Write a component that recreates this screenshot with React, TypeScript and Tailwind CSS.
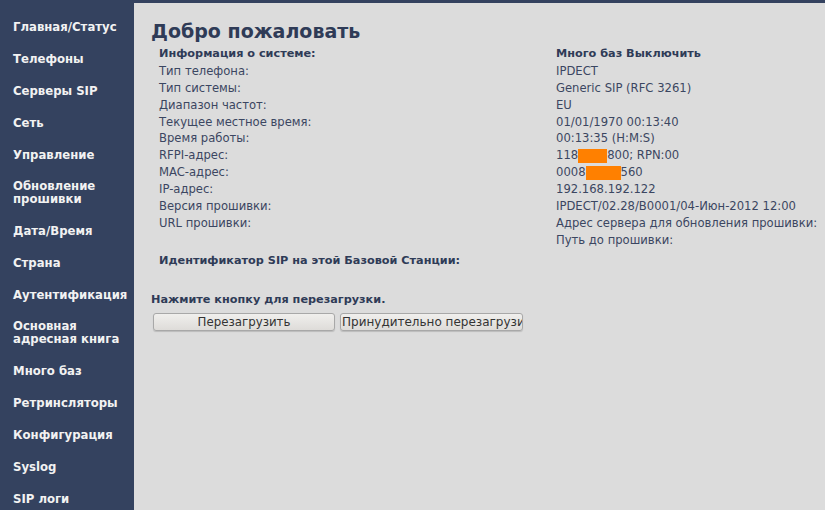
import React from 'react';

const MENU: string[][] = [
  ['Главная/Статус'],
  ['Телефоны'],
  ['Серверы SIP'],
  ['Сеть'],
  ['Управление'],
  ['Обновление', 'прошивки'],
  ['Дата/Время'],
  ['Страна'],
  ['Аутентификация'],
  ['Основная', 'адресная книга'],
  ['Много баз'],
  ['Ретринсляторы'],
  ['Конфигурация'],
  ['Syslog'],
  ['SIP логи'],
];

const ROWS: [string, React.ReactNode][] = [
  ['Тип телефона:', 'IPDECT'],
  ['Тип системы:', 'Generic SIP (RFC 3261)'],
  ['Диапазон частот:', 'EU'],
  ['Текущее местное время:', '01/01/1970 00:13:40'],
  ['Время работы:', '00:13:35 (H:M:S)'],
  [
    'RFPI-адрес:',
    <span className="flex items-center">
      118<span className="inline-block w-[29px] h-[14px] bg-[#ff8000]" />800; RPN:00
    </span>,
  ],
  [
    'MAC-адрес:',
    <span className="flex items-center">
      0008<span className="inline-block w-[35px] h-[14px] bg-[#ff8000]" />560
    </span>,
  ],
  ['IP-адрес:', '192.168.192.122'],
  ['Версия прошивки:', 'IPDECT/02.28/B0001/04-Июн-2012 12:00'],
  ['URL прошивки:', 'Адрес сервера для обновления прошивки:'],
  ['', 'Путь до прошивки:'],
];

export default function App() {
  return (
    <div className="flex h-[510px] w-[825px] overflow-hidden bg-[#34425f] font-['DejaVu_Sans',sans-serif]">
      <nav className="w-[134px] shrink-0 pt-[11px]">
        {MENU.map((lines) => (
          <div
            key={lines.join(' ')}
            className={`pl-[13px] py-[9px] text-[11.7px] font-bold text-[#f2f2f2] ${lines.length > 1 ? 'leading-[13px]' : 'leading-[14px]'}`}
          >
            {lines.map((l) => (
              <div key={l} className="whitespace-nowrap">{l}</div>
            ))}
          </div>
        ))}
      </nav>

      <main className="mt-[3px] flex-1 bg-[#dcdcdc] pl-[17px] text-[#3b4661]">
        <h1 className="mt-[16px] text-[19px] font-bold leading-[24px] text-[#2f3b57]">Добро пожаловать</h1>

        <div className="mt-[3px] pl-[8px] text-[11.6px] leading-[16.9px]">
          <div className="flex text-[11.25px] font-bold text-[#2f3b57]">
            <div className="w-[397px]">Информация о системе:</div>
            <div>Много баз Выключить</div>
          </div>
          {ROWS.map(([label, value], i) => (
            <div key={i} className="flex h-[16.9px]">
              <div className="w-[397px] shrink-0">{label}</div>
              <div className="whitespace-nowrap">{value}</div>
            </div>
          ))}
          <div className="mt-[4px] text-[11.25px] font-bold text-[#2f3b57]">Идентификатор SIP на этой Базовой Станции:</div>
        </div>

        <div className="mt-[21px] text-[11.25px] font-bold leading-[17px] text-[#2f3b57]">Нажмите кнопку для перезагрузки.</div>

        <div className="mt-[5px] flex gap-[5px] pl-[2px]">
          <button className="h-[18px] w-[182px] rounded-[3px] border border-[#a8a8a8] bg-gradient-to-b from-[#f0efed] to-[#dedcd9] text-[11.8px] leading-[16px] text-[#333] shadow-[0_1px_1px_rgba(0,0,0,0.15)]">
            Перезагрузить
          </button>
          <button className="h-[18px] w-[183px] overflow-hidden whitespace-nowrap rounded-[3px] border border-[#a8a8a8] bg-gradient-to-b from-[#f0efed] to-[#dedcd9] px-[1px] text-left text-[12px] leading-[16px] text-[#333] shadow-[0_1px_1px_rgba(0,0,0,0.15)]">
            Принудительно перезагрузить
          </button>
        </div>
      </main>
    </div>
  );
}
